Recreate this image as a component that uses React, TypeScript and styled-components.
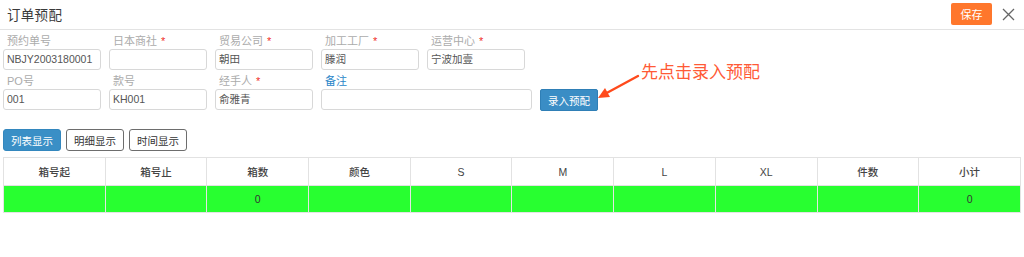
import React from "react";
import styled, { createGlobalStyle } from "styled-components";

const Global = createGlobalStyle`
  html, body { margin: 0; padding: 0; background: #fff; }
  body {
    font-family: "Liberation Sans", "Noto Sans CJK SC", sans-serif;
    color: #333;
  }
  * { box-sizing: border-box; }
`;

const Page = styled.div`
  width: 1024px;
  height: 257px;
  position: relative;
  overflow: hidden;
`;

const Header = styled.div`
  height: 30px;
  display: flex;
  align-items: center;
  padding: 0 9px 1px 7px;
  border-bottom: 1px solid #e3e3e3;
`;

const Title = styled.div`
  flex: 1;
  font-size: 13.5px;
  color: #3a3a3a;
  letter-spacing: 0.3px;
`;

const SaveButton = styled.button`
  width: 41px;
  height: 22px;
  border: none;
  border-radius: 2px;
  background: #ff772c;
  color: #fff;
  font-family: inherit;
  font-size: 11px;
  padding: 0;
  margin-right: 10px;
`;

const CloseIcon = styled.svg`
  width: 13px;
  height: 13px;
  display: block;
`;

const Form = styled.div`
  padding: 3px 0 0 3px;
  display: flex;
  flex-direction: column;
  gap: 3px;
`;

const FormRow = styled.div`
  display: flex;
  align-items: flex-end;
  gap: 8px;
`;

const Field = styled.div<{ $w?: number }>`
  width: ${(p) => p.$w ?? 98}px;
  display: flex;
  flex-direction: column;
`;

const Label = styled.div`
  height: 16px;
  line-height: 16px;
  font-size: 11px;
  padding-left: 4px;
  color: #ababab;
`;

const NoteLabel = styled(Label)`
  color: #2a86c8;
`;

const Star = styled.span`
  color: #f0302a;
  margin-left: 4px;
`;

const Input = styled.div`
  height: 21px;
  border: 1px solid #d8d8d8;
  border-radius: 3px;
  padding-left: 3px;
  font-size: 10.5px;
  line-height: 19px;
  color: #555;
`;

const EntryWrap = styled.div`
  position: relative;
  display: flex;
  align-items: flex-end;
`;

const BlueButton = styled.button`
  height: 22px;
  border: 1px solid #2f7fb6;
  border-radius: 2px;
  background: #3a8dc5;
  color: #fff;
  font-family: inherit;
  font-size: 10.5px;
  padding: 0 7px;
  margin-bottom: -1px;
`;

const Hint = styled.div`
  position: absolute;
  left: 55px;
  top: -45px;
  width: 240px;
  height: 60px;
  pointer-events: none;
`;

const HintText = styled.div`
  position: absolute;
  left: 46px;
  top: 14px;
  font-size: 17px;
  color: #ff5a36;
  white-space: nowrap;
`;

const ArrowSvg = styled.svg`
  position: absolute;
  left: 0;
  top: 0;
  width: 60px;
  height: 60px;
`;

const Tabs = styled.div`
  display: flex;
  gap: 5px;
  padding: 19px 0 0 3px;
`;

const Tab = styled.button<{ $active?: boolean }>`
  height: 22px;
  padding: 0 7px;
  border-radius: 3px;
  font-family: inherit;
  font-size: 10.5px;
  border: 1px solid ${(p) => (p.$active ? "#3387be" : "#6d6d6d")};
  background: ${(p) => (p.$active ? "#3a8fc6" : "#fff")};
  color: ${(p) => (p.$active ? "#fff" : "#333")};
`;

const Table = styled.table`
  margin: 6px 0 0 3px;
  width: 1018px;
  border-collapse: collapse;
  table-layout: fixed;
`;

const Th = styled.th`
  height: 28px;
  border: 1px solid #e2e2e2;
  font-size: 10.5px;
  font-weight: 500;
  color: #444;
  text-align: center;
  padding: 0;
`;

const Td = styled.td`
  height: 27px;
  border: 1px solid #e4e4e4;
  background: #28ff30;
  font-size: 10.5px;
  color: #333;
  text-align: center;
  padding: 0;
`;

const columns = ["箱号起", "箱号止", "箱数", "颜色", "S", "M", "L", "XL", "件数", "小计"];
const values = ["", "", "0", "", "", "", "", "", "", "0"];

const row1 = [
  { label: "预约单号", value: "NBJY2003180001" },
  { label: "日本商社", value: "", req: true },
  { label: "贸易公司", value: "朝田", req: true },
  { label: "加工工厂", value: "滕润", req: true },
  { label: "运营中心", value: "宁波加壹", req: true },
];

const row2 = [
  { label: "PO号", value: "001" },
  { label: "款号", value: "KH001" },
  { label: "经手人", value: "俞雅青", req: true },
];

export default function App() {
  return (
    <Page>
      <Global />
      <Header>
        <Title>订单预配</Title>
        <SaveButton>保存</SaveButton>
        <CloseIcon viewBox="0 0 13 13">
          <path d="M1 1 L12 12 M12 1 L1 12" stroke="#666" strokeWidth="1.3" fill="none" />
        </CloseIcon>
      </Header>
      <Form>
        <FormRow>
          {row1.map((f) => (
            <Field key={f.label}>
              <Label>
                {f.label}
                {f.req && <Star>*</Star>}
              </Label>
              <Input>{f.value}</Input>
            </Field>
          ))}
        </FormRow>
        <FormRow>
          {row2.map((f) => (
            <Field key={f.label}>
              <Label>
                {f.label}
                {f.req && <Star>*</Star>}
              </Label>
              <Input>{f.value}</Input>
            </Field>
          ))}
          <Field $w={211}>
            <NoteLabel>备注</NoteLabel>
            <Input />
          </Field>
          <EntryWrap>
            <BlueButton>录入预配</BlueButton>
            <Hint>
              <ArrowSvg viewBox="0 0 60 60">
                <path d="M43 32 L8 51" stroke="#ff4a1c" strokeWidth="2.4" fill="none" strokeLinecap="round" />
                <path d="M3 54 L10 44 L15 53 Z" fill="#ff4a1c" />
              </ArrowSvg>
              <HintText>先点击录入预配</HintText>
            </Hint>
          </EntryWrap>
        </FormRow>
      </Form>
      <Tabs>
        <Tab $active>列表显示</Tab>
        <Tab>明细显示</Tab>
        <Tab>时间显示</Tab>
      </Tabs>
      <Table>
        <thead>
          <tr>
            {columns.map((c) => (
              <Th key={c}>{c}</Th>
            ))}
          </tr>
        </thead>
        <tbody>
          <tr>
            {values.map((v, i) => (
              <Td key={i}>{v}</Td>
            ))}
          </tr>
        </tbody>
      </Table>
    </Page>
  );
}
